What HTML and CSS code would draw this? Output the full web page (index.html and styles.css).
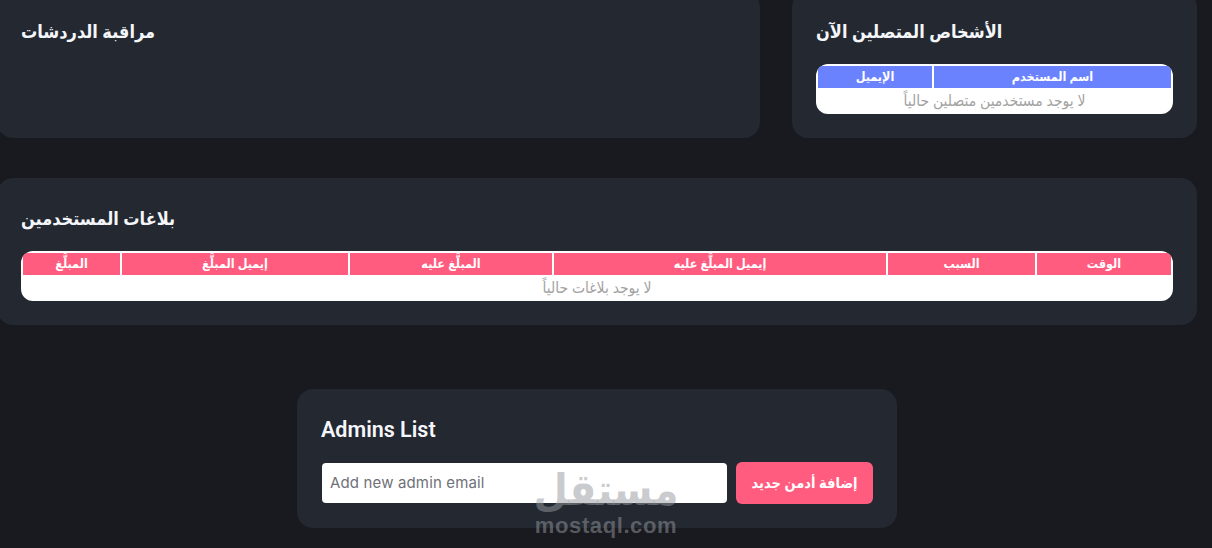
FILE: index.html
```html
<!DOCTYPE html>
<html lang="ar">
<head>
    <meta charset="UTF-8">
    <meta name="viewport" content="width=device-width, initial-scale=1.0">
    <title>لوحة التحكم</title>
    <link rel="stylesheet" href="styles.css">
</head>
<body>
    <main class="page" dir="rtl">
        <div class="top-row">
            <section class="card">
                <h2>الأشخاص المتصلين الآن</h2>
                <table class="data-table online-table">
                    <colgroup>
                        <col class="col-user">
                        <col class="col-mail">
                    </colgroup>
                    <thead>
                        <tr>
                            <th>اسم المستخدم</th>
                            <th>الإيميل</th>
                        </tr>
                    </thead>
                    <tbody>
                        <tr>
                            <td colspan="2">لا يوجد مستخدمين متصلين حالياً</td>
                        </tr>
                    </tbody>
                </table>
            </section>
            <section class="card">
                <h2>مراقبة الدردشات</h2>
            </section>
        </div>

        <section class="card reports-card">
            <h2>بلاغات المستخدمين</h2>
            <table class="data-table reports-table">
                <colgroup>
                    <col class="col-time">
                    <col class="col-reason">
                    <col class="col-target-mail">
                    <col class="col-target">
                    <col class="col-reporter-mail">
                    <col class="col-reporter">
                </colgroup>
                <thead>
                    <tr>
                        <th>الوقت</th>
                        <th>السبب</th>
                        <th>إيميل المبلَّغ عليه</th>
                        <th>المبلَّغ عليه</th>
                        <th>إيميل المبلَّغ</th>
                        <th>المبلَّغ</th>
                    </tr>
                </thead>
                <tbody>
                    <tr>
                        <td colspan="6">لا يوجد بلاغات حالياً</td>
                    </tr>
                </tbody>
            </table>
        </section>

        <section class="card admins-card" dir="ltr">
            <h2>Admins List</h2>
            <form class="admin-form">
                <input type="email" placeholder="Add new admin email">
                <button type="button">إضافة أدمن جديد</button>
            </form>
        </section>
    </main>

    <div class="watermark">
        <span class="watermark-ar">مستقل</span>
        <span class="watermark-en">mostaql.com</span>
    </div>
</body>
</html>
```

FILE: styles.css
```css
* {
    box-sizing: border-box;
}
html, body {
    height: 100%;
    overflow: hidden;
}
body {
    margin: 0;
    background-color: #181a1f;
    color: #fff;
    font-family: Roboto, "DejaVu Sans Condensed", "DejaVu Sans", sans-serif;
}
.page {
    width: 1200px;
    margin: -9px 0 0 -3px;
}
.top-row {
    display: grid;
    grid-template-columns: 405px 1fr;
    gap: 32px;
    margin-bottom: 40px;
}
.card {
    background-color: #232831;
    border-radius: 16px;
    padding: 24px;
}
h2 {
    margin: 0 0 16px;
    font-size: 18px;
    font-weight: 700;
    line-height: 33px;
    text-align: left;
    color: #f4f6fa;
}
.data-table {
    width: 100%;
    table-layout: fixed;
    border-collapse: separate;
    border-spacing: 2px 2px;
    background-color: #fff;
    border-radius: 12px;
    overflow: hidden;
}
.data-table th {
    height: 22px;
    padding: 0;
    font-size: 12.5px;
    font-weight: 700;
    line-height: 22px;
    color: #fff;
}
.data-table td {
    height: 22px;
    padding: 0;
    font-size: 15.5px;
    line-height: 22px;
    text-align: center;
    color: #a3a3a3;
}
.online-table th {
    background-color: #6b82ff;
}
.reports-table th {
    background-color: #ff5c7f;
}
.col-user { width: 237px; }
.col-mail { width: 114px; }
.col-time { width: 134px; }
.col-reason { width: 147px; }
.col-target-mail { width: 332px; }
.col-target { width: 202px; }
.col-reporter-mail { width: 226px; }
.col-reporter { width: 97px; }

.reports-card {
    margin-bottom: 64px;
}
.admins-card {
    width: 600px;
    margin: 0 auto;
}
.admins-card h2 {
    font-size: 21.5px;
    font-weight: 600;
}
.admin-form {
    display: flex;
    align-items: center;
    gap: 9px;
}
.admin-form input {
    width: 405px;
    height: 40px;
    margin-left: 1px;
    padding: 0 8px 2px;
    border: 0;
    border-radius: 4px;
    background-color: #fff;
    font-family: Inter, sans-serif;
    font-size: 15px;
    letter-spacing: 0.15px;
}
.admin-form input::placeholder {
    color: #6f7178;
    opacity: 1;
}
.admin-form button {
    width: 137px;
    height: 42px;
    padding: 0;
    border: 0;
    border-radius: 6px;
    background-color: #ff5c7f;
    color: #fff;
    font-family: Roboto, "DejaVu Sans Condensed", "DejaVu Sans", sans-serif;
    font-size: 14.5px;
    font-weight: 700;
}

/* watermark sits on top of the last card */
.watermark {
    position: absolute;
    left: 534px;
    top: 466px;
    width: 144px;
    display: flex;
    flex-direction: column;
    align-items: center;
    color: rgba(150, 152, 158, 0.5);
    pointer-events: none;
}
.watermark-ar {
    height: 47px;
    font-family: "DejaVu Sans Condensed", "DejaVu Sans", sans-serif;
    font-size: 44px;
    font-weight: 700;
    line-height: 47px;
}
.watermark-en {
    font-family: "Liberation Sans", sans-serif;
    font-size: 22px;
    font-weight: 700;
    line-height: 26px;
    letter-spacing: 0.6px;
}
```
